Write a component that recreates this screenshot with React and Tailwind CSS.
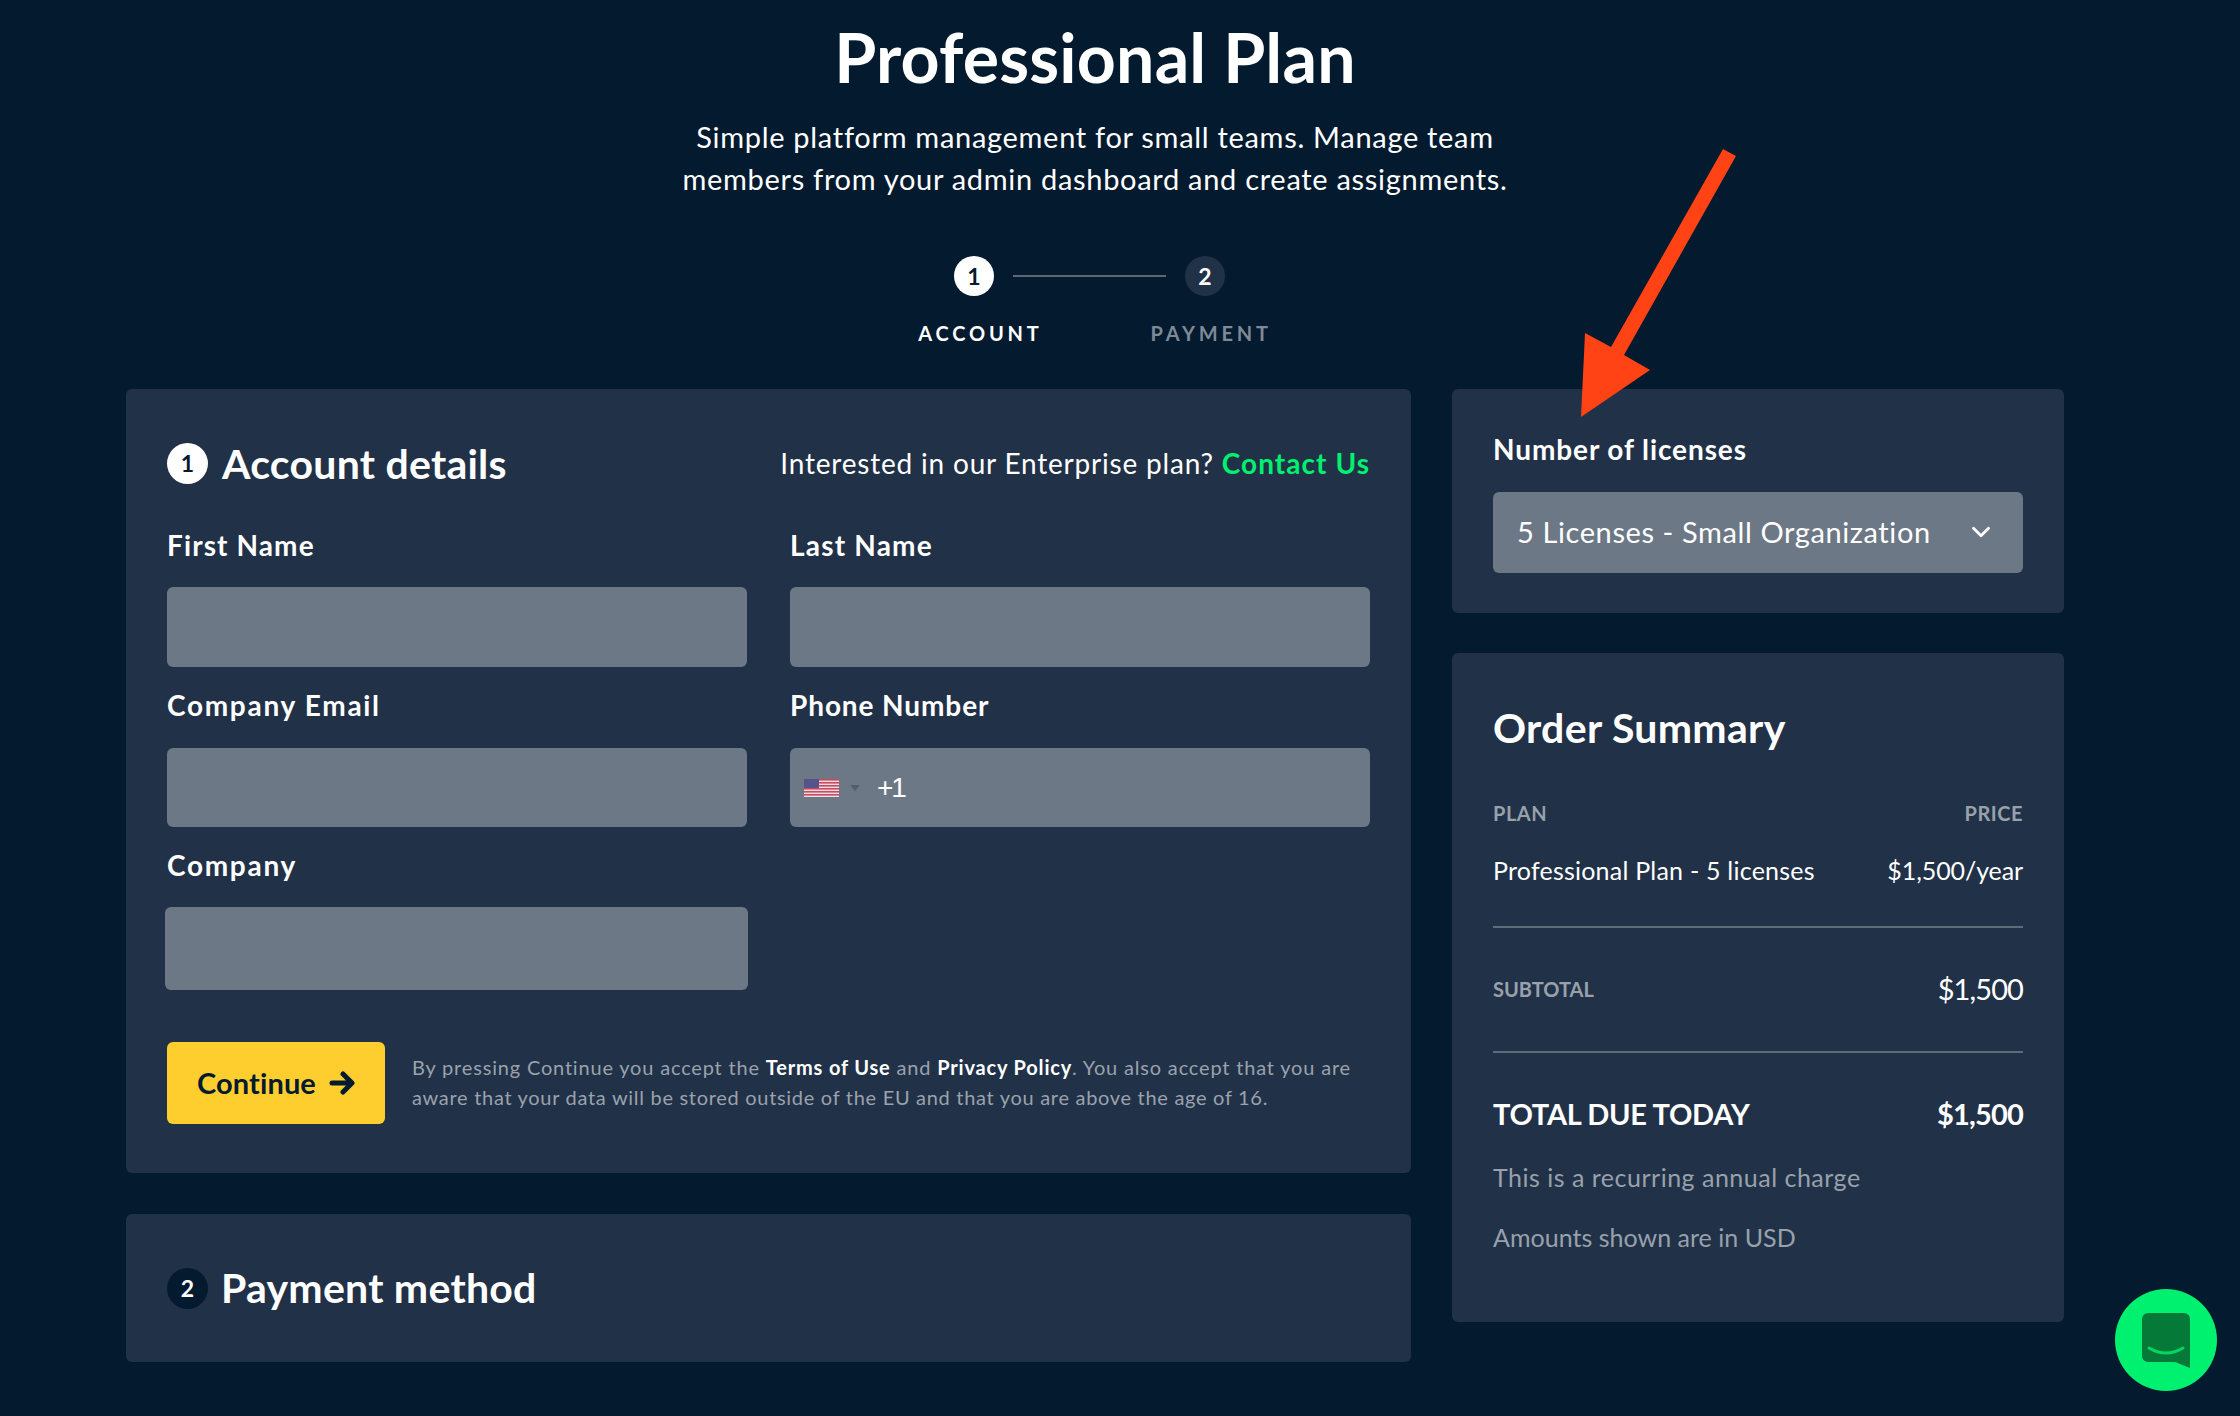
import React from 'react';
import { ChevronDown } from 'lucide-react';

const Field = ({ label, className = '', labelClass = 'tracking-[1.1px]', children }) => (
  <div className="flex flex-col">
    <div className={`h-[40px] text-[28px] leading-[40px] font-bold text-white ${labelClass}`}>{label}</div>
    <div className={`mt-[22px] h-[80px] rounded-[6px] bg-[#6c7885] ${className}`}>{children}</div>
  </div>
);

const SummaryRow = ({ left, right, className = '' }) => (
  <div className={`flex items-center justify-between ${className}`}>
    {left}
    {right}
  </div>
);

const UsFlag = () => (
  <svg width="35" height="18" viewBox="0 0 35 18">
    <rect width="35" height="18" fill="#e8dfe2" />
    {[0, 3, 6, 9, 12, 15].map((y) => (
      <rect key={y} y={y} width="35" height="1.6" fill="#d0485f" />
    ))}
    <rect width="15" height="9" fill="#55538c" />
  </svg>
);

const App = () => {
  return (
    <div className="relative h-[1416px] w-full overflow-hidden bg-[#031a2f] font-['Lato',sans-serif] text-white">
      <div className="ml-[126px] w-[1938px]">
        <h1 className="pt-[20px] text-center text-[68px] leading-[74px] font-bold tracking-[0.2px]">Professional Plan</h1>
        <p className="mt-[22px] text-center text-[29px] leading-[42px] tracking-[0.7px]">
          Simple platform management for small teams. Manage team
          <br />
          members from your admin dashboard and create assignments.
        </p>

        <div className="mt-[56px] flex items-center justify-center pr-[11px]">
          <div className="flex h-[40px] w-[40px] items-center justify-center rounded-full bg-white text-[23px] font-bold text-[#031a2f]">1</div>
          <div className="mx-[19px] h-[2px] w-[153px] bg-[#5c6875]" />
          <div className="flex h-[40px] w-[40px] items-center justify-center rounded-full bg-[#213147] text-[23px] font-bold text-white">2</div>
        </div>
        <div className="mt-[22px] flex justify-center gap-[108px] text-[20px] leading-[30px] font-bold tracking-[3.8px]">
          <span>ACCOUNT</span>
          <span className="text-[#7f8a96]">PAYMENT</span>
        </div>

        <div className="mt-[41px] flex gap-[41px]">
          <div className="flex w-[1285px] flex-col gap-[41px]">
            <section className="h-[784px] rounded-[6px] bg-[#213147] px-[41px] pt-[54px]">
              <div className="flex h-[41px] items-center justify-between">
                <div className="flex items-center gap-[14px]">
                  <div className="flex h-[41px] w-[41px] items-center justify-center rounded-full bg-white text-[23px] font-bold text-[#031a2f]">1</div>
                  <h2 className="text-[41px] font-bold tracking-[0.25px]">Account details</h2>
                </div>
                <div className="-mt-[1px] text-[28px] tracking-[0.8px]">
                  Interested in our Enterprise plan? <span className="font-bold tracking-[1.05px] text-[#00f16f]">Contact Us</span>
                </div>
              </div>

              <div className="mt-[41px] grid grid-cols-[580px_580px] gap-x-[43px] gap-y-[18px]">
                <Field label="First Name" />
                <Field label="Last Name" labelClass="tracking-[1.2px]" />
                <Field label="Company Email" labelClass="tracking-[1.7px]" className="mt-[23px] !h-[79px]" />
                <Field label="Phone Number" labelClass="tracking-[0.9px]" className="mt-[23px] flex !h-[79px] items-center pl-[14px]">
                  <UsFlag />
                  <span className="ml-[11px] h-0 w-0 border-x-[5px] border-t-[6px] border-x-transparent border-t-[#565d66]" />
                  <span className="ml-[17px] font-['Liberation_Sans',sans-serif] text-[28px] tracking-[-2px]">+1</span>
                </Field>
                <Field label="Company" labelClass="tracking-[1.7px]" className="-ml-[2px] -mr-[1px] !h-[83px]" />
              </div>

              <div className="mt-[52px] flex items-center gap-[27px]">
                <button className="flex h-[82px] w-[218px] items-center justify-center gap-[13px] rounded-[6px] bg-[#fece2f] pb-[1px] text-[29px] font-bold tracking-[0.1px] text-[#031a2f]">
                  Continue
                  <svg width="26" height="26" viewBox="0 0 26 26" fill="none" stroke="#031a2f" strokeWidth="5" strokeLinecap="round" strokeLinejoin="round">
                    <path d="M3 13h19M14 4l9 9-9 9" />
                  </svg>
                </button>
                <p className="-mt-[2px] text-[20px] leading-[30px] text-[#9aa2ad]">
                  <span className="tracking-[0.82px]">
                    By pressing Continue you accept the <b className="text-white">Terms of Use</b> and <b className="text-white">Privacy Policy</b>. You also accept that you are
                  </span>
                  <br />
                  <span className="tracking-[0.7px]">aware that your data will be stored outside of the EU and that you are above the age of 16.</span>
                </p>
              </div>
            </section>

            <section className="flex h-[148px] items-center gap-[13px] rounded-[6px] bg-[#213147] px-[41px]">
              <div className="flex h-[41px] w-[41px] items-center justify-center rounded-full bg-[#031a2f] text-[23px] font-bold">2</div>
              <h2 className="text-[41px] font-bold tracking-[0.25px]">Payment method</h2>
            </section>
          </div>

          <div className="flex w-[612px] flex-col gap-[40px]">
            <section className="h-[224px] rounded-[6px] bg-[#213147] px-[41px] pt-[41px]">
              <div className="h-[38px] text-[28px] leading-[38px] font-bold tracking-[0.9px]">Number of licenses</div>
              <div className="mt-[24px] flex h-[81px] items-center justify-between rounded-[6px] bg-[#6c7885] pr-[27px] pb-[1px] pl-[24px] text-[29px] tracking-[0.6px]">
                5 Licenses - Small Organization
                <ChevronDown size={30} strokeWidth={2.2} />
              </div>
            </section>

            <section className="h-[669px] rounded-[6px] bg-[#213147] px-[41px] pt-[50px]">
              <h2 className="-mt-[1px] mb-[1px] h-[52px] text-[41px] leading-[52px] font-bold tracking-[0.3px]">Order Summary</h2>
              <SummaryRow
                className="mt-[45px] h-[28px] text-[20px] font-bold tracking-[0.5px] text-[#98a1ac]"
                left={<span>PLAN</span>}
                right={<span>PRICE</span>}
              />
              <SummaryRow
                className="mt-[25px] h-[38px] text-[25px]"
                left={<span className="tracking-[0.22px]">Professional Plan - 5 licenses</span>}
                right={<span className="tracking-[-0.1px]">$1,500/year</span>}
              />
              <div className="mt-[36px] h-[2px] bg-[#5f6b78]" />
              <SummaryRow
                className="mt-[42px] h-[38px]"
                left={<span className="text-[20px] font-bold text-[#98a1ac]">SUBTOTAL</span>}
                right={<span className="text-[29px] tracking-[-0.9px]">$1,500</span>}
              />
              <div className="mt-[43px] h-[2px] bg-[#5f6b78]" />
              <SummaryRow
                className="mt-[42px] h-[38px] text-[29px] font-bold"
                left={<span className="tracking-[-0.3px]">TOTAL DUE TODAY</span>}
                right={<span className="tracking-[-0.8px]">$1,500</span>}
              />
              <div className="mt-[25px] h-[38px] text-[25px] leading-[38px] tracking-[0.5px] text-[#98a1ac]">This is a recurring annual charge</div>
              <div className="mt-[22px] h-[38px] text-[25px] leading-[38px] tracking-[0.02px] text-[#98a1ac]">Amounts shown are in USD</div>
            </section>
          </div>
        </div>
      </div>

      {/* annotation arrow on top of the screenshot */}
      <svg className="absolute top-0 left-0 pointer-events-none" width="2240" height="1416">
        <polygon points="1723,149 1736,156 1624,355 1650,370 1581,417 1585,333 1611,347" fill="#ff4314" />
      </svg>

      <div className="absolute top-[1289px] left-[2115px] flex h-[102px] w-[102px] items-center justify-center rounded-full bg-[#00f16f]">
        <svg width="48" height="55" viewBox="0 0 48 55">
          <path d="M6 0h36a6 6 0 0 1 6 6v49l-15-6H6a6 6 0 0 1-6-6V6a6 6 0 0 1 6-6z" fill="#057a38" />
          <path d="M7 35q17 10 34 0" fill="none" stroke="#00d862" strokeWidth="3" strokeLinecap="round" />
        </svg>
      </div>
    </div>
  );
};

export default App;
